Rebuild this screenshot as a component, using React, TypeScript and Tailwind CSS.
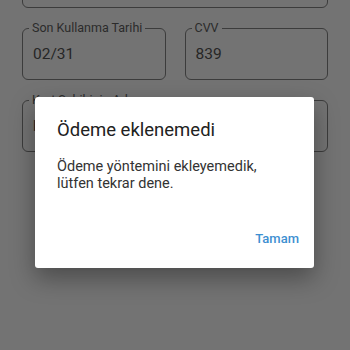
import React from "react";

function Field({ label, value, className }: { label?: string; value?: string; className?: string }) {
  return (
    <div className={"relative h-[52px] rounded-[6px] border border-[#3c3c3c] " + (className ?? "")}>
      {label ? (
        <span className="absolute -top-[10px] left-[6px] bg-[#737373] px-[3px] text-[12.5px] leading-[17px] text-[#2b2b2b]">
          {label}
        </span>
      ) : null}
      {value ? (
        <div className="flex h-full items-center pl-[10px] pt-[2px] text-[15.5px] text-[#262626]">{value}</div>
      ) : null}
    </div>
  );
}

export default function App() {
  return (
    <div
      className="relative h-[350px] w-[350px] overflow-hidden bg-[#737373]"
      style={{ fontFamily: "Roboto, 'Noto Sans', sans-serif" }}
    >
      <div className="flex flex-col gap-[20px] px-[22px] -mt-[44px]">
        <Field />
        <div className="flex gap-[19px]">
          <Field className="flex-1" label="Son Kullanma Tarihi" value="02/31" />
          <Field className="flex-1" label="CVV" value="839" />
        </div>
        <Field label="Kart Sahibinin Adı" value="bilge" />
      </div>

      <div className="absolute left-[35px] top-[97px] flex h-[171px] w-[279px] flex-col rounded-[3px] bg-white shadow-[0_10px_24px_rgba(0,0,0,0.35)]">
        <div className="pl-[22px] pt-[21px] text-[18.5px] leading-[24px] text-[#212121]">Ödeme eklenemedi</div>
        <div className="pl-[22px] pt-[16px] text-[14.5px] leading-[17px] text-[#333333]">
          Ödeme yöntemini ekleyemedik,
          <br />
          lütfen tekrar dene.
        </div>
        <div className="mt-auto flex justify-end pb-[20px] pr-[15px]">
          <span className="text-[13px] font-medium leading-[18px] text-[#3d8fd1]">Tamam</span>
        </div>
      </div>
    </div>
  );
}
